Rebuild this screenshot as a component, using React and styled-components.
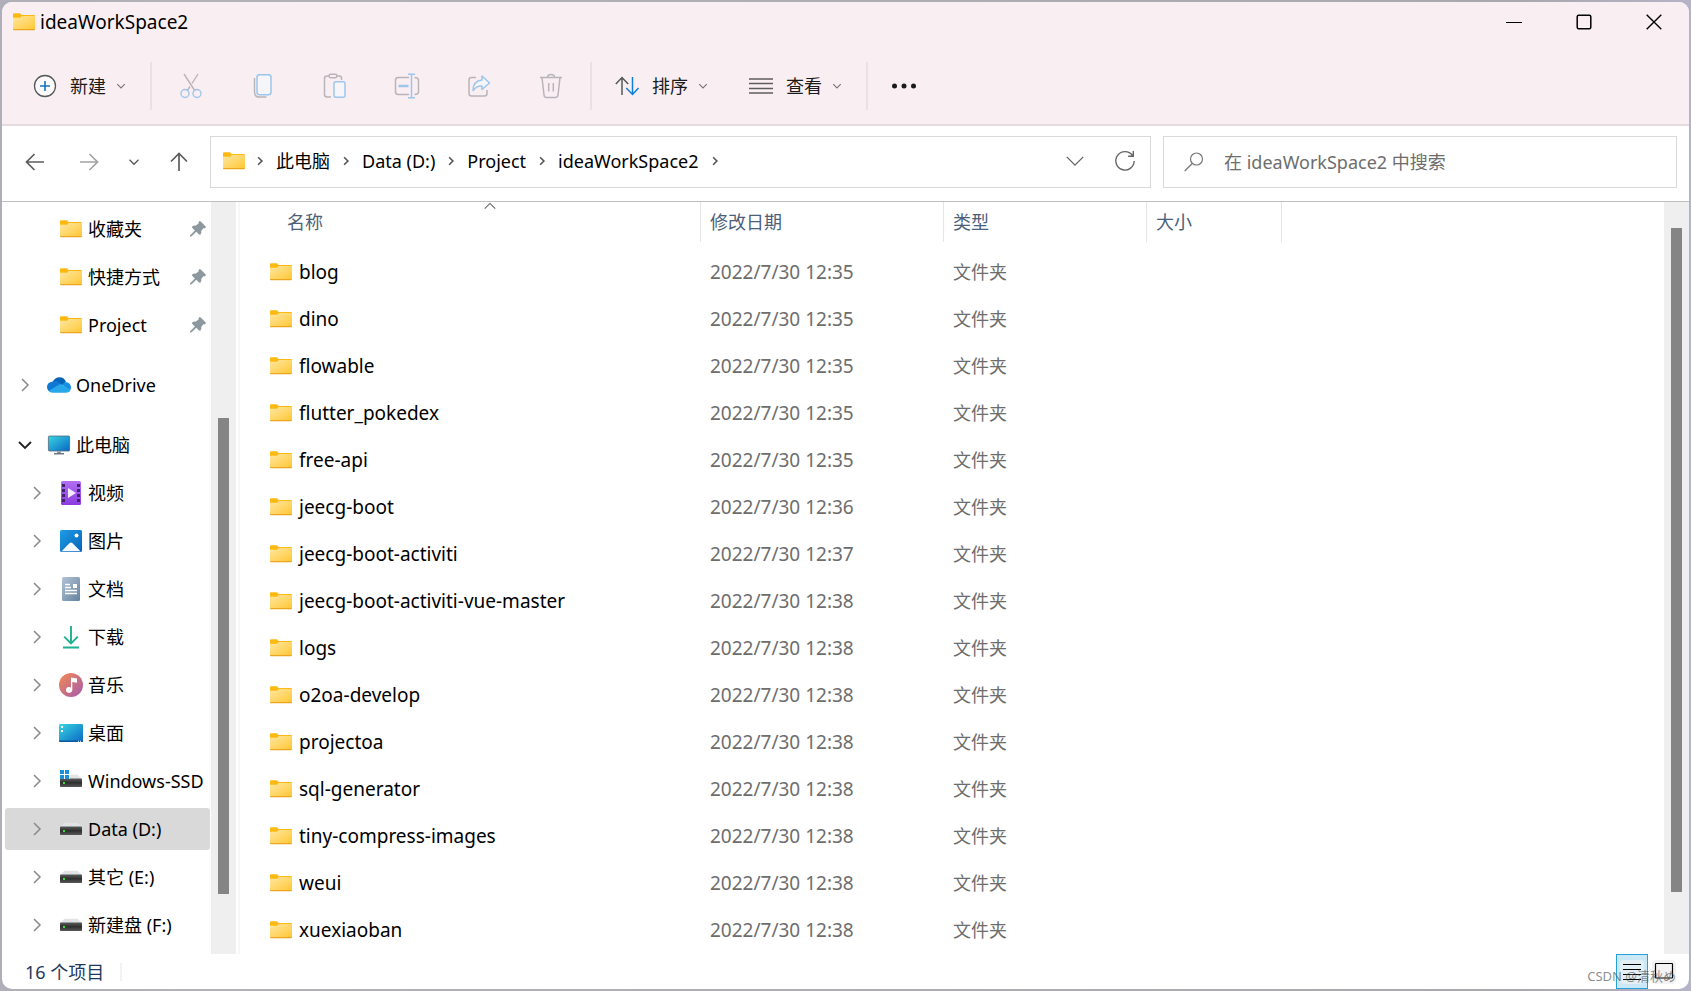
import React from 'react'
import styled, { createGlobalStyle } from 'styled-components'

const FILES = [
  { name: 'blog', date: '2022/7/30 12:35' },
  { name: 'dino', date: '2022/7/30 12:35' },
  { name: 'flowable', date: '2022/7/30 12:35' },
  { name: 'flutter_pokedex', date: '2022/7/30 12:35' },
  { name: 'free-api', date: '2022/7/30 12:35' },
  { name: 'jeecg-boot', date: '2022/7/30 12:36' },
  { name: 'jeecg-boot-activiti', date: '2022/7/30 12:37' },
  { name: 'jeecg-boot-activiti-vue-master', date: '2022/7/30 12:38' },
  { name: 'logs', date: '2022/7/30 12:38' },
  { name: 'o2oa-develop', date: '2022/7/30 12:38' },
  { name: 'projectoa', date: '2022/7/30 12:38' },
  { name: 'sql-generator', date: '2022/7/30 12:38' },
  { name: 'tiny-compress-images', date: '2022/7/30 12:38' },
  { name: 'weui', date: '2022/7/30 12:38' },
  { name: 'xuexiaoban', date: '2022/7/30 12:38' }
]

const PINNED = ['收藏夹', '快捷方式', 'Project']

const PATH = ['此电脑', 'Data (D:)', 'Project', 'ideaWorkSpace2']

const GlobalStyle = createGlobalStyle`
  * {
    box-sizing: border-box;
  }
  body {
    margin: 0;
    font-family: 'Noto Sans', 'Noto Sans CJK SC', sans-serif;
    font-size: 18px;
    line-height: 24px;
    color: #000000;
  }
  svg {
    display: block;
    flex: none;
    overflow: visible;
  }
  button, input {
    font: inherit;
    color: inherit;
  }
`

/* icons */

const FolderIcon = () => (
  <svg width="22" height="18" viewBox="0 0 22 18">
    <defs>
      <linearGradient id="folder" x1="0" y1="0" x2="1" y2="1">
        <stop offset="0" stopColor="#ffe8a3" />
        <stop offset="1" stopColor="#ffc735" />
      </linearGradient>
    </defs>
    <path d="M0 1.2Q0 .3 1 .3H7l1.6 1.7H21q1 0 1 1V8H0z" fill="#fdb913" />
    <path d="M0 4.7H7.2L8.8 3H22V16H0z" fill="url(#folder)" />
    <path d="M0 16H22Q22 17.2 21 17.2H1Q0 17.2 0 16z" fill="#eba51f" />
  </svg>
)

const Chevron = ({ dir = 'right', size = 8, color = '#8a8a8a', width = 1.5 }) => {
  const turn = { right: 0, down: 90, up: -90 }[dir]
  return (
    <svg width={size * 2} height={size * 2} viewBox="-8 -8 16 16">
      <path
        d="M-3-6L3 0l-6 6"
        transform={`rotate(${turn})`}
        fill="none"
        stroke={color}
        strokeWidth={width}
      />
    </svg>
  )
}

const PinIcon = () => (
  <svg width="16" height="16" viewBox="0 0 16 16">
    <path
      d="M9 0.6q.9-.9 1.7-.1l4.8 4.8q.8.8-.1 1.6-.8.6-2 .3l-2.100 2.600q.4 2.300-.8 3.700-.7.700-1.400 0L6.200 10.800 1.400 15.600 0 15.600V14.500L4.900 9.500 2.200 6.800q-.7-.7 0-1.300 1.400-1.200 3.700-.9L8.600 2.500Q8.300 1.400 9 .6z"
      fill="#8c979e"
    />
  </svg>
)

const PlusIcon = () => (
  <svg width="24" height="24" viewBox="0 0 24 24" fill="none">
    <circle cx="12" cy="12" r="10.500" fill="#ffffff" fillOpacity=".6" stroke="#55585b" strokeWidth="1.300" />
    <path d="M12 7v10M7 12h10" stroke="#0f75c2" strokeWidth="1.600" />
  </svg>
)

const CutIcon = () => (
  <svg width="24" height="26" viewBox="0 0 24 26" fill="none" strokeWidth="1.400">
    <path d="M5 1L16 18M19 1L13 10.500M11 13.500L8 18" stroke="#b9b4b9" />
    <circle cx="6" cy="20.500" r="4" stroke="#9ec6ea" />
    <circle cx="18" cy="20.500" r="4" stroke="#9ec6ea" />
  </svg>
)

const CopyIcon = () => (
  <svg width="24" height="26" viewBox="0 0 24 26" fill="none" strokeWidth="1.500">
    <path d="M3.500 5v14q0 5 5 5h7" stroke="#b9b4b9" />
    <rect x="6" y="1.700" width="14" height="20" rx="2.500" fill="#f6f5fa" stroke="#9ec6ea" />
  </svg>
)

const PasteIcon = () => (
  <svg width="24" height="26" viewBox="0 0 24 26" fill="none" strokeWidth="1.500">
    <path d="M8 24H4q-2.500 0-2.500-2.500V5.500Q1.500 3 4 3h2M14 3h2.500q2 0 2 2v2" stroke="#b9b4b9" />
    <rect x="6" y="1.300" width="8" height="3.500" rx="1.700" stroke="#b9b4b9" />
    <rect x="11" y="8.700" width="11" height="15.500" rx="2" fill="#f6f5fa" stroke="#9ec6ea" />
  </svg>
)

const RenameIcon = () => (
  <svg width="26" height="26" viewBox="0 0 26 26" fill="none" strokeWidth="1.500">
    <path d="M15 21.500H4.500Q1.500 21.500 1.500 19V7q0-2.500 3-2.500H15M20.500 4.500q4 0 4 3v11q0 3-4 3" stroke="#b9b4b9" />
    <path d="M17.500 1.500v23M14 1.200h7M14 24.800h7" stroke="#9ec6ea" />
    <path d="M4.500 13h10" stroke="#9ec6ea" strokeWidth="2.500" />
  </svg>
)

const ShareIcon = () => (
  <svg width="24" height="24" viewBox="0 0 24 24" fill="none" strokeWidth="1.500" strokeLinejoin="round">
    <path d="M9 3.500H4.500Q2 3.500 2 6v13.500q0 2.500 2.500 2.500h13q2.500 0 2.500-2.500V16" stroke="#b9b4b9" />
    <path d="M15 2l7.500 7L15 15.500V12q-5.500-.5-9 4.500 0-9.500 9-10.500z" fill="#f6f5fa" stroke="#9ec6ea" />
  </svg>
)

const TrashIcon = () => (
  <svg width="24" height="26" viewBox="0 0 24 26" fill="none" stroke="#b9b4b9" strokeWidth="1.500">
    <path d="M1 4.500h22M8.500 4.500q0-3 3.500-3t3.500 3M3 4.500L5 22q.3 2.500 2.500 2.500h9Q18.700 24.500 19 22L21 4.500M9.700 10v8.500M14.300 10v8.500" />
  </svg>
)

const SortIcon = () => (
  <svg width="24" height="20" viewBox="0 0 24 20" fill="none" strokeWidth="1.500">
    <path d="M7 19V1.500M.8 8L7 1.500 13.200 8" stroke="#55585b" />
    <path d="M17.500 1v17.500M11.300 12l6.200 6.500L23.500 12" stroke="#0f7fd8" />
  </svg>
)

const ViewIcon = () => (
  <svg width="24" height="18" viewBox="0 0 24 18" stroke="#5f5c5e" strokeWidth="1.400">
    <path d="M0 2h24M0 6.500h24M0 11.500h24M0 16h24" />
  </svg>
)

const MoreIcon = () => (
  <svg width="26" height="6" viewBox="0 0 26 6" fill="#1b1b1b">
    <circle cx="3.500" cy="3" r="2.500" />
    <circle cx="13" cy="3" r="2.500" />
    <circle cx="22.500" cy="3" r="2.500" />
  </svg>
)

const ArrowIcon = ({ turn = 0, color = '#5c5c5c' }) => (
  <svg width="20" height="20" viewBox="-10 -10 20 20">
    <path
      d="M9 0H-8.500M-.5-8L-8.500 0l8 8"
      transform={`rotate(${turn})`}
      fill="none"
      stroke={color}
      strokeWidth="1.700"
    />
  </svg>
)

const RefreshIcon = () => (
  <svg width="22" height="22" viewBox="0 0 22 22" fill="none" stroke="#666666" strokeWidth="1.400">
    <path d="M18.500 5.500A9.200 9.200 0 1 0 20.200 11M19.300 1v5.200h-5.200" />
  </svg>
)

const SearchIcon = () => (
  <svg width="20" height="20" viewBox="0 0 20 20" fill="none" stroke="#777777" strokeWidth="1.200">
    <circle cx="12.500" cy="7" r="6" />
    <path d="M8.200 11.500L.7 19" />
  </svg>
)

const CloudIcon = () => (
  <svg width="24" height="16" viewBox="0 0 24 16">
    <path d="M5.500 5Q8 .2 12.500.2 17.500.2 19 5l-6 5z" fill="#0564b8" />
    <path d="M7 4.200q2.200-.4 4.500 1L16 8 5 15H5.500Q0 15 0 9.800 0 5 7 4.200z" fill="#0f78d4" />
    <path d="M15.500 7.500Q17 5 19.500 5.200q4 .4 4.500 5 0 3-2 4.500z" fill="#1490df" />
    <path d="M1.800 13.800L12.300 7.500q1.500-.8 3 .2l8 4.800Q22.500 15.800 19 15.800H5.500q-2.500 0-3.700-2z" fill="#28a8ea" />
  </svg>
)

const PcIcon = () => (
  <svg width="24" height="20" viewBox="0 0 24 20">
    <defs>
      <linearGradient id="screen" x1="0" y1="0" x2="1" y2="1">
        <stop offset="0" stopColor="#37d6e4" />
        <stop offset="1" stopColor="#0a66c2" />
      </linearGradient>
    </defs>
    <rect x="1.400" y="1" width="21.200" height="15" rx="1" fill="url(#screen)" stroke="#53697a" strokeWidth=".8" />
    <path d="M10 16.400h4v2h-4z" fill="#8a979f" />
    <path d="M7 18.200h10v1.200H7z" fill="#4c5a63" />
  </svg>
)

const VideoIcon = () => (
  <svg width="24" height="24" viewBox="0 0 24 24">
    <defs>
      <linearGradient id="video" x1="0" y1="0" x2="0" y2="1">
        <stop offset="0" stopColor="#b26ff2" />
        <stop offset="1" stopColor="#8c3be0" />
      </linearGradient>
    </defs>
    <rect x="2" width="20" height="24" rx="1.500" fill="url(#video)" />
    <path
      d="M3 3h3v3H3zM3 8h3v3H3zM3 13h3v3H3zM3 18h3v3H3zM18 3h3v3h-3zM18 8h3v3h-3zM18 13h3v3h-3zM18 18h3v3h-3z"
      fill="#42236e"
    />
    <path d="M9 7v10l8-5z" fill="#f4ebff" />
  </svg>
)

const PictureIcon = () => (
  <svg width="24" height="24" viewBox="0 0 24 24">
    <defs>
      <linearGradient id="picture" x1="0" y1="0" x2="1" y2="1">
        <stop offset="0" stopColor="#1d9de6" />
        <stop offset="1" stopColor="#0962b8" />
      </linearGradient>
    </defs>
    <rect x="1" y="1" width="22" height="22" rx="1.500" fill="url(#picture)" />
    <circle cx="17.500" cy="6.500" r="2" fill="#ffffff" />
    <path d="M2.500 22.300L10.700 14q1.300-1 2.600 0l8.200 8.300z" fill="#f3f9ff" />
  </svg>
)

const DocIcon = () => (
  <svg width="24" height="24" viewBox="0 0 24 24">
    <defs>
      <linearGradient id="doc" x1="0" y1="0" x2="1" y2="1">
        <stop offset="0" stopColor="#b2c4d6" />
        <stop offset="1" stopColor="#65829f" />
      </linearGradient>
    </defs>
    <rect x="3" width="18" height="24" rx="1.500" fill="url(#doc)" />
    <path d="M6 7.500h5M6 10.500h6M6 13.500h12M6 16.500h12" stroke="#ffffff" strokeWidth="1.300" />
    <rect x="14" y="7" width="4" height="4" fill="#ffffff" />
  </svg>
)

const DownloadIcon = () => (
  <svg width="24" height="24" viewBox="0 0 24 24" fill="none" stroke="#1fb08f" strokeWidth="1.900">
    <path d="M12 1v17.500M5.200 11.700l6.800 6.800 6.800-6.800M4 22.500h16" />
  </svg>
)

const MusicIcon = () => (
  <svg width="24" height="24" viewBox="0 0 24 24">
    <defs>
      <linearGradient id="music" x1="0" y1="0" x2="1" y2="1">
        <stop offset="0" stopColor="#f58a50" />
        <stop offset="1" stopColor="#a45bb0" />
      </linearGradient>
    </defs>
    <circle cx="12" cy="12" r="12" fill="url(#music)" />
    <path d="M12 4.500l6 1v4.200l-4.700-.8V17a3.200 3 0 1 1-1.300-2.500z" fill="#ffffff" />
  </svg>
)

const DesktopIcon = () => (
  <svg width="24" height="18" viewBox="0 0 24 18">
    <rect width="24" height="18" rx="1.200" fill="url(#screen)" />
    <path d="M2 2h2v2H2zM2 6h2v2H2z" fill="#ffffff" />
    <path d="M0 16.500h24v.5q0 1-1.200 1H1.200Q0 18 0 17z" fill="#0b5aa0" />
    <path d="M19 16.800h1v1h-1zM21 16.800h1v1h-1z" fill="#ffffff" />
  </svg>
)

const DriveIcon = ({ system }) => (
  <svg width="24" height="18" viewBox="0 0 24 18">
    <defs>
      <linearGradient id="drive" x1="0" y1="0" x2="0" y2="1">
        <stop offset="0" stopColor="#5a5a5a" />
        <stop offset=".5" stopColor="#2f2f2f" />
        <stop offset="1" stopColor="#595959" />
      </linearGradient>
    </defs>
    <path d="M5.500 2.800h13L23 7H1z" fill="#e1e3e5" />
    <rect x="1" y="6.500" width="22" height="8.500" rx=".8" fill="url(#drive)" />
    <path d="M4 10h2v2H4z" fill="#34e034" />
    {system && (
      <React.Fragment>
        <path d="M.5-2.500h10V7h-10z" fill="#ffffff" />
        <path d="M1-2h4v4H1zM6-2h4v4H6zM1 3h4v4H1zM6 3h4v4H6z" fill="#1791dc" />
      </React.Fragment>
    )}
  </svg>
)

const THIS_PC = [
  { name: '视频', Icon: VideoIcon },
  { name: '图片', Icon: PictureIcon },
  { name: '文档', Icon: DocIcon },
  { name: '下载', Icon: DownloadIcon },
  { name: '音乐', Icon: MusicIcon },
  { name: '桌面', Icon: DesktopIcon },
  { name: 'Windows-SSD', Icon: () => <DriveIcon system /> },
  { name: 'Data (D:)', Icon: DriveIcon, selected: true },
  { name: '其它 (E:)', Icon: DriveIcon },
  { name: '新建盘 (F:)', Icon: DriveIcon }
]

const App = () => {
  const [query, setQuery] = React.useState('')

  return (
    <Desktop>
      <GlobalStyle />
      <Window>
        <TitleBar>
          <Title>
            <FolderIcon />
            ideaWorkSpace2
          </Title>
          <CaptionButton aria-label="最小化">
            <svg width="16" height="16" viewBox="0 0 16 16">
              <path d="M0 8.500h16" stroke="#000000" />
            </svg>
          </CaptionButton>
          <CaptionButton aria-label="最大化">
            <svg width="16" height="16" viewBox="0 0 16 16">
              <rect x="1.200" y="1.200" width="13.600" height="13.600" rx="1.500" fill="none" stroke="#000000" strokeWidth="1.500" />
            </svg>
          </CaptionButton>
          <CaptionButton aria-label="关闭">
            <svg width="16" height="16" viewBox="0 0 16 16">
              <path d="M.7.7l14.600 14.600M15.300.7L.7 15.300" stroke="#000000" strokeWidth="1.400" />
            </svg>
          </CaptionButton>
        </TitleBar>

        <Toolbar>
          <MenuButton>
            <PlusIcon />
            <span>新建</span>
            <Chevron dir="down" size={5} color="#777377" width={1.8} />
          </MenuButton>
          <Separator />
          <ToolButton disabled aria-label="剪切"><CutIcon /></ToolButton>
          <ToolButton disabled aria-label="复制"><CopyIcon /></ToolButton>
          <ToolButton disabled aria-label="粘贴"><PasteIcon /></ToolButton>
          <ToolButton disabled aria-label="重命名"><RenameIcon /></ToolButton>
          <ToolButton disabled aria-label="共享"><ShareIcon /></ToolButton>
          <ToolButton disabled aria-label="删除"><TrashIcon /></ToolButton>
          <Separator />
          <MenuButton>
            <SortIcon />
            <span>排序</span>
            <Chevron dir="down" size={5} color="#777377" width={1.8} />
          </MenuButton>
          <MenuButton>
            <ViewIcon />
            <span>查看</span>
            <Chevron dir="down" size={5} color="#777377" width={1.8} />
          </MenuButton>
          <Separator />
          <ToolButton aria-label="更多" $narrow><MoreIcon /></ToolButton>
        </Toolbar>

        <AddressRow>
          <NavButtons>
            <NavButton aria-label="后退"><ArrowIcon /></NavButton>
            <NavButton aria-label="前进"><ArrowIcon turn={180} color="#a3a3a3" /></NavButton>
            <NavButton aria-label="最近浏览的位置" $narrow>
              <Chevron dir="down" size={6} color="#5c5c5c" width={1.8} />
            </NavButton>
            <NavButton aria-label="上移"><ArrowIcon turn={90} /></NavButton>
          </NavButtons>
          <AddressBar>
            <FolderIcon />
            <Crumbs>
              <Chevron size={5} color="#555555" width={2.6} />
              {PATH.map(part => (
                <React.Fragment key={part}>
                  <a href="#">{part}</a>
                  <Chevron size={5} color="#555555" width={2.6} />
                </React.Fragment>
              ))}
            </Crumbs>
            <BarButton aria-label="展开">
              <Chevron dir="down" size={11} color="#666666" width={1} />
            </BarButton>
            <BarButton aria-label="刷新"><RefreshIcon /></BarButton>
          </AddressBar>
          <SearchBox>
            <SearchIcon />
            <input
              aria-label="搜索"
              placeholder="在 ideaWorkSpace2 中搜索"
              value={query}
              onChange={e => setQuery(e.target.value)}
            />
          </SearchBox>
        </AddressRow>

        <Body>
          <Sidebar>
            <TreeGroup>
              {PINNED.map(name => (
                <TreeItem key={name} href="#">
                  <Expander $depth={1} />
                  <IconSlot><FolderIcon /></IconSlot>
                  <TreeLabel>{name}</TreeLabel>
                  <PinIcon />
                </TreeItem>
              ))}
            </TreeGroup>
            <TreeGroup>
              <TreeItem href="#">
                <Expander><Chevron size={8} /></Expander>
                <IconSlot><CloudIcon /></IconSlot>
                <TreeLabel>OneDrive</TreeLabel>
              </TreeItem>
            </TreeGroup>
            <TreeGroup>
              <TreeItem href="#">
                <Expander><Chevron dir="down" size={8} color="#222222" width={1.8} /></Expander>
                <IconSlot><PcIcon /></IconSlot>
                <TreeLabel>此电脑</TreeLabel>
              </TreeItem>
              {THIS_PC.map(({ name, Icon, selected }) => (
                <TreeItem key={name} href="#" $selected={selected}>
                  <Expander $depth={1}><Chevron size={8} /></Expander>
                  <IconSlot><Icon /></IconSlot>
                  <TreeLabel>{name}</TreeLabel>
                </TreeItem>
              ))}
            </TreeGroup>
          </Sidebar>
          <ScrollTrack>
            <ScrollThumb $before={216} $size={476} $after={60} />
          </ScrollTrack>
          <Splitter />
          <Content>
            <FileTable>
              <colgroup>
                <col style={{ width: 461 }} />
                <col style={{ width: 243 }} />
                <col style={{ width: 203 }} />
                <col style={{ width: 135 }} />
                <col />
              </colgroup>
              <thead>
                <tr>
                  <th>
                    <HeadCell $first>
                      名称
                      <SortMark><Chevron dir="up" size={7} color="#666666" width={1.2} /></SortMark>
                    </HeadCell>
                  </th>
                  <th><HeadCell>修改日期</HeadCell></th>
                  <th><HeadCell>类型</HeadCell></th>
                  <th><HeadCell>大小</HeadCell></th>
                  <th />
                </tr>
              </thead>
              <tbody>
                {FILES.map(file => (
                  <tr key={file.name}>
                    <td>
                      <FileName>
                        <FolderIcon />
                        {file.name}
                      </FileName>
                    </td>
                    <td><FileDate>{file.date}</FileDate></td>
                    <td>文件夹</td>
                    <td />
                    <td />
                  </tr>
                ))}
              </tbody>
            </FileTable>
          </Content>
          <ScrollTrack>
            <ScrollThumb $before={26} $size={664} $after={62} />
          </ScrollTrack>
        </Body>

        <StatusBar>
          <Count>16 个项目</Count>
          <ViewToggle>
            <ViewButton aria-label="详细信息" $active>
              <svg width="24" height="24" viewBox="0 0 24 24">
                <rect width="24" height="24" rx="4" fill="#e3eff4" />
                <path d="M3 4.500h18M3 9.500h18M3 14.500h18M3 19.500h18" stroke="#000000" strokeWidth="1.200" />
              </svg>
            </ViewButton>
            <ViewButton aria-label="大图标">
              <svg width="24" height="24" viewBox="0 0 24 24">
                <rect width="24" height="24" rx="4" fill="#f3f3f3" />
                <rect x="3.500" y="3.500" width="17" height="14.500" rx=".5" fill="none" stroke="#000000" strokeWidth="1.200" />
              </svg>
            </ViewButton>
          </ViewToggle>
          <Watermark>CSDN @清秋め</Watermark>
        </StatusBar>
      </Window>
    </Desktop>
  )
}

const Desktop = styled('div')`
  height: 100vh;
  padding: 2px;
  background: linear-gradient(90deg, #b0aeb8 0%, #b3b2b6 10%, #a9a8ae 90%, #b5b3c6 100%);
`

const Window = styled('div')`
  position: relative;
  display: flex;
  flex-direction: column;
  height: 100%;
  overflow: hidden;
  background: #ffffff;
  border-radius: 10px;
`

const TitleBar = styled('header')`
  display: flex;
  align-items: center;
  height: 40px;
  background: #f9eff3;
`

const Title = styled('div')`
  display: flex;
  flex: 1;
  align-items: center;
  gap: 5px;
  padding-left: 11px;
  font-size: 19px;
`

const CaptionButton = styled('button')`
  display: flex;
  align-items: center;
  justify-content: center;
  width: 70px;
  height: 40px;
  padding: 0;
  border: none;
  background: none;
`

const Toolbar = styled('div')`
  display: flex;
  align-items: center;
  height: 84px;
  padding: 6px 0 0 11px;
  background: #f9eff3;
  border-bottom: 2px solid #e5dce0;
`

const MenuButton = styled('button')`
  display: flex;
  align-items: center;
  gap: 10px;
  height: 48px;
  padding: 0 21px 0 20px;
  border: none;
  background: none;
  color: #1b1b1b;

  > svg:first-child {
    margin-right: 3px;
  }
`

const ToolButton = styled('button')`
  display: flex;
  align-items: center;
  justify-content: center;
  width: ${props => (props.$narrow ? '66px' : '72px')};
  height: 48px;
  padding: 0;
  border: none;
  background: none;
`

const Separator = styled('div')`
  width: 2px;
  height: 48px;
  margin: 0 3px;
  background: #ebe1e5;
`

const AddressRow = styled('div')`
  display: grid;
  grid-template-columns: 208px minmax(0, 941fr) minmax(0, 526fr);
  align-items: center;
  height: 76px;
  padding: 0 12px 4px 0;
  border-bottom: 1px solid #bfbfbf;
`

const NavButtons = styled('div')`
  display: flex;
  align-items: center;
  padding-left: 6px;
`

const NavButton = styled('button')`
  display: flex;
  align-items: center;
  justify-content: center;
  width: ${props => (props.$narrow ? '36px' : '54px')};
  height: 48px;
  padding: 0;
  border: none;
  background: none;
`

const AddressBar = styled('div')`
  display: flex;
  align-items: center;
  height: 52px;
  padding: 0 0 2px 12px;
  border: 1px solid #d9d9d9;
`

const Crumbs = styled('nav')`
  display: flex;
  flex: 1;
  align-items: center;
  gap: 11px;
  padding-left: 10px;

  a {
    color: #000000;
    text-decoration: none;
  }
`

const BarButton = styled('button')`
  display: flex;
  align-items: center;
  justify-content: center;
  width: 50px;
  height: 48px;
  padding: 0;
  border: none;
  background: none;
`

const SearchBox = styled('label')`
  display: flex;
  align-items: center;
  gap: 20px;
  height: 52px;
  margin-left: 12px;
  padding: 0 20px;
  border: 1px solid #d9d9d9;

  input {
    flex: 1;
    min-width: 0;
    padding: 0;
    border: none;
    outline: none;
    background: none;
  }

  input::placeholder {
    color: #6d6d6d;
    opacity: 1;
  }
`

const Body = styled('div')`
  display: flex;
  flex: 1;
  min-height: 0;
`

const Sidebar = styled('nav')`
  width: 209px;
  padding: 6px 1px 0 3px;
  overflow: hidden;
`

const TreeGroup = styled('div')`
  display: flex;
  flex-direction: column;
  gap: 6px;
  margin-bottom: 18px;
`

const TreeItem = styled('a')`
  display: flex;
  flex: none;
  align-items: center;
  height: 42px;
  padding-right: 4px;
  border-radius: 3px;
  background: ${props => (props.$selected ? '#d9d9d9' : 'none')};
  color: #000000;
  text-decoration: none;
  white-space: nowrap;
`

const Expander = styled('span')`
  display: flex;
  flex: none;
  justify-content: flex-end;
  width: ${props => (props.$depth ? '54px' : '42px')};
  padding-right: 14px;
`

const IconSlot = styled('span')`
  display: flex;
  flex: none;
  justify-content: center;
  width: 24px;
  margin-right: 5px;
`

const TreeLabel = styled('span')`
  flex: 1;
`

const ScrollTrack = styled('div')`
  display: flex;
  flex: none;
  flex-direction: column;
  align-items: center;
  width: 25px;
  background: #efefef;
`

const ScrollThumb = styled('div')`
  flex: ${props => props.$size} 1 0;
  width: 11px;
  margin: ${props => props.$before}px 0 ${props => props.$after}px;
  background: #858585;
`

const Splitter = styled('div')`
  flex: none;
  width: 4px;
  border-right: 2px solid #f7f7f7;
`

const Content = styled('main')`
  flex: 1;
  min-width: 0;
  overflow: hidden;
`

const FileTable = styled('table')`
  width: 100%;
  table-layout: fixed;
  border-collapse: collapse;

  th {
    height: 46px;
    padding: 0;
    font-weight: 400;
    text-align: left;
    vertical-align: top;
  }

  td {
    height: 47px;
    padding: 0 0 0 9px;
    color: #6d6d6d;
  }
`

const HeadCell = styled('div')`
  position: relative;
  height: 40px;
  padding: 8px 0 0 ${props => (props.$first ? '47px' : '9px')};
  border-right: 1px solid #e5e5e5;
  color: #4c607a;
`

const SortMark = styled('span')`
  position: absolute;
  top: -3px;
  left: 243px;
`

const FileName = styled('div')`
  display: flex;
  align-items: center;
  gap: 7px;
  padding-left: 21px;
  font-size: 19px;
  color: #000000;
`

const FileDate = styled('time')`
  font-size: 19px;
`

const StatusBar = styled('footer')`
  position: relative;
  display: flex;
  align-items: center;
  justify-content: space-between;
  height: 35px;
  padding: 0 9px 0 23px;
`

const Count = styled('span')`
  padding-right: 16px;
  border-right: 2px solid #f3f3f3;
  line-height: 18px;
  color: #1e395b;
`

const ViewToggle = styled('div')`
  display: flex;
`

const ViewButton = styled('button')`
  display: flex;
  align-items: center;
  justify-content: center;
  width: 32px;
  height: 35px;
  padding: 0;
  border: 1px solid ${props => (props.$active ? '#26a0da' : 'transparent')};
  background: ${props => (props.$active ? '#cbe8f6' : 'none')};
`

const Watermark = styled('span')`
  position: absolute;
  right: 13px;
  bottom: 4px;
  font-size: 13px;
  line-height: 18px;
  color: rgba(90, 90, 90, 0.7);
  pointer-events: none;
`

export default App
